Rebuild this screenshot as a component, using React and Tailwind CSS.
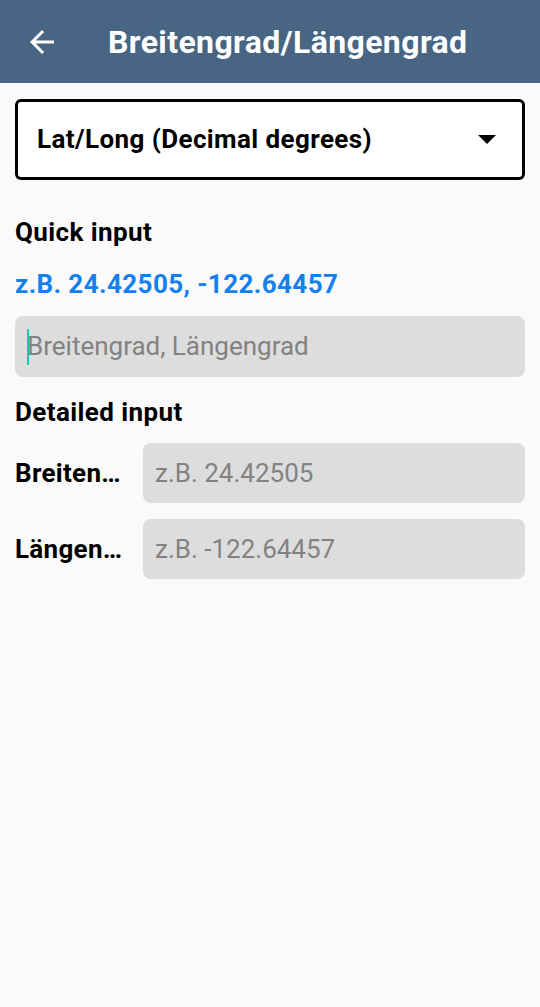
import React from "react";

function BackArrow() {
  return (
    <svg viewBox="0 0 24 24" className="w-9 h-9" fill="#ffffff">
      <path d="M20 11H7.83l5.59-5.59L12 4l-8 8 8 8 1.41-1.41L7.83 13H20v-2z" />
    </svg>
  );
}

function DropTriangle() {
  return (
    <svg viewBox="0 0 18 9" className="w-[18px] h-[9px]" fill="#000000">
      <path d="M0 0h18L9 9z" />
    </svg>
  );
}

function FieldRow({ label, placeholder }) {
  return (
    <div className="flex items-center">
      <div className="w-[128px] shrink-0 text-[26px] leading-[28px] font-bold text-black tracking-[0.3px] whitespace-nowrap">
        {label}
      </div>
      <div className="flex-1 h-[60px] rounded-[8px] bg-[#dddddd] flex items-center px-[12px] text-[26px] text-[#828282]">
        {placeholder}
      </div>
    </div>
  );
}

export default function App() {
  return (
    <div className="w-[540px] h-[1007px] bg-[#fafafa] font-['Roboto',_'Noto_Sans',_sans-serif]">
      {/* header */}
      <div className="h-[83px] bg-[#486583] flex items-center">
        <div className="ml-[24px]">
          <BackArrow />
        </div>
        <h1 className="ml-[48px] text-[32px] font-bold text-white tracking-[0.4px]">
          Breitengrad/Längengrad
        </h1>
      </div>

      <div className="px-[15px] pt-[16px]">
        {/* format select */}
        <div className="h-[81px] border-[3px] border-black rounded-[6px] bg-white flex items-center justify-between pl-[19px] pr-[26px]">
          <span className="text-[26px] font-bold text-black tracking-[0.4px]">Lat/Long (Decimal degrees)</span>
          <DropTriangle />
        </div>

        {/* quick input */}
        <div className="mt-[38px] text-[26px] leading-[28px] font-bold text-black tracking-[0.4px]">Quick input</div>
        <div className="mt-[24px] text-[26px] leading-[28px] font-bold text-[#1580ec] tracking-[0.4px]">
          z.B. 24.42505, -122.64457
        </div>
        <div className="mt-[18px] h-[61px] rounded-[8px] bg-[#dddddd] flex items-center pl-[12px] text-[26px] text-[#828282]">
          <span className="w-[2px] h-[36px] bg-[#1fc8b4] -mr-[2px]" />
          Breitengrad, Längengrad
        </div>

        {/* detailed input */}
        <div className="mt-[21px] text-[26px] leading-[28px] font-bold text-black tracking-[0.4px]">Detailed input</div>
        <div className="mt-[17px] flex flex-col gap-[16px]">
          <FieldRow label="Breiten…" placeholder="z.B. 24.42505" />
          <FieldRow label="Längen…" placeholder="z.B. -122.64457" />
        </div>
      </div>
    </div>
  );
}
